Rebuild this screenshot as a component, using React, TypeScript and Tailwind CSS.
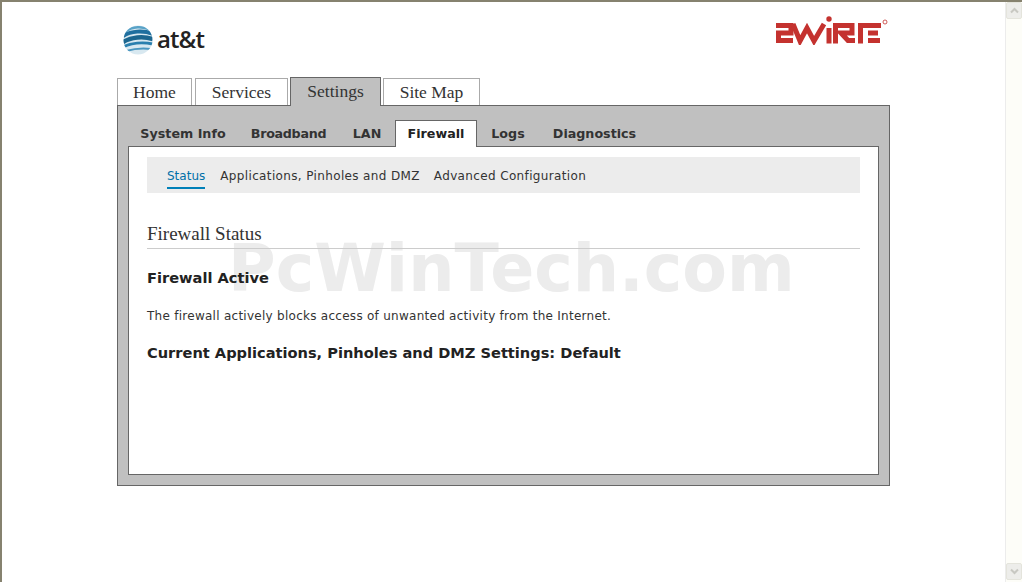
const mainTabs = [
  { label: 'Home', width: 'w-[75px] mr-px' },
  { label: 'Services', width: 'w-[93px]' },
  { label: 'Settings', width: 'w-[91px]', active: true },
  { label: 'Site Map', width: 'w-[97px]' },
]

const subTabs = [
  { label: 'System Info', width: 'w-[110px]' },
  { label: 'Broadband', width: 'w-[101px] tracking-[-0.3px]' },
  { label: 'LAN', width: 'w-[56px]' },
  { label: 'Firewall', width: 'w-[82px]', active: true },
  { label: 'Logs', width: 'w-[62px]' },
  { label: 'Diagnostics', width: 'w-[111px]' },
]

function AttLogo() {
  return (
    <div className="flex items-center gap-[4px]">
      <svg width="30" height="30" viewBox="0 0 30 30" aria-hidden="true">
        <defs>
          <clipPath id="globe">
            <circle cx="15" cy="15" r="14.5" />
          </clipPath>
        </defs>
        <g clipPath="url(#globe)">
          <rect width="30" height="30" fill="#d8e8f0" />
          <path d="M2 7 C9 1 20 1 28 5" stroke="#5aa3c8" strokeWidth="2.5" fill="none" />
          <path d="M0 11 C8 6 20 5 30 9" stroke="#1f6f9f" strokeWidth="4" fill="none" />
          <path d="M0 17 C8 12 20 11 30 14" stroke="#1c668f" strokeWidth="4.5" fill="none" />
          <path d="M0 22 C8 18 20 17 30 19" stroke="#2a7fae" strokeWidth="3" fill="none" />
          <path d="M3 26 C10 24 20 23 28 24" stroke="#4b97c0" strokeWidth="2" fill="none" />
        </g>
      </svg>
      <span className="-mt-[3px] font-['Open_Sans',sans-serif] text-[24px] font-semibold leading-none tracking-[-0.9px] text-[#222]">at&amp;t</span>
    </div>
  )
}

function TwoWireLogo() {
  return (
    <svg width="112" height="29" viewBox="0 0 112 29" aria-hidden="true">
      <g fill="none" stroke="#c4322f" strokeWidth="5">
        <path d="M0 9.5 H15 V17 H2.5 V24.5 H17" />
        <path d="M17 8 L24 25 L31 12 L38 25 L48 8" />
        <path d="M53 12 V27.5" />
        <path d="M59.5 27.5 V9.5 H76 V17 H65 L72 24.5 H79" />
        <path d="M84.5 27.5 V9.5 H105 M92 17 H102 M92 24.5 H104" />
      </g>
      <circle cx="53" cy="3" r="2.7" fill="#c4322f" />
      <circle cx="109" cy="6" r="2" fill="none" stroke="#c4322f" strokeWidth="0.8" />
    </svg>
  )
}

function App() {
  return (
    <div className="relative flex h-[582px] w-[1022px] overflow-hidden border-t-2 border-l-2 border-[#86826f] bg-white font-['DejaVu_Sans',sans-serif]">
      <div className="flex flex-1 flex-col pl-[115px]">
        <header className="flex h-[75px] w-[773px] items-start justify-between">
          <div className="ml-[6px] mt-[23px]">
            <AttLogo />
          </div>
          <div className="mr-[2px] mt-[14px]">
            <TwoWireLogo />
          </div>
        </header>

        <nav className="relative z-10 flex h-[28px] items-end gap-[2px] font-['Liberation_Serif',serif]">
          {mainTabs.map((tab) =>
            tab.active ? (
              <div
                key={tab.label}
                className={`${tab.width} -mb-px flex h-[29px] items-center justify-center border border-b-0 border-[#666] bg-[#c0c0c0] pb-[2px] text-[17.5px] text-[#333]`}>
                {tab.label}
              </div>
            ) : (
              <div
                key={tab.label}
                className={`${tab.width} flex h-[27px] items-center justify-center border border-b-0 border-[#aaa] bg-white text-[17.5px] text-[#333]`}>
                {tab.label}
              </div>
            ),
          )}
        </nav>

        <main className="flex h-[381px] w-[773px] flex-col border border-[#666] bg-[#c0c0c0] px-[10px] pb-[10px] pt-[14px]">
          <div className="relative z-10 flex h-[27px]">
            {subTabs.map((tab) =>
              tab.active ? (
                <div
                  key={tab.label}
                  className={`${tab.width} flex h-[27px] items-center justify-center border border-b-0 border-[#666] bg-white text-[12.7px] font-bold text-[#222]`}>
                  {tab.label}
                </div>
              ) : (
                <div
                  key={tab.label}
                  className={`${tab.width} flex h-[27px] items-center justify-center text-[12.7px] font-bold text-[#333]`}>
                  {tab.label}
                </div>
              ),
            )}
          </div>

          <section className="relative -mt-px flex-1 border border-[#666] bg-white px-[18px] pt-[10px]">
            {/* watermark sits under the text */}
            <div className="pointer-events-none absolute left-[99px] top-[82px] whitespace-nowrap text-[65px] font-bold leading-[80px] text-[#ececec]">
              PcWinTech.com
            </div>

            <div className="relative flex h-[36px] items-center bg-[#ececec] pl-[20px] pt-[2px] text-[12px] text-[#333]">
              <span className="mt-[2px] border-b-2 border-[#0080b8] pb-[2px] pt-[2px] text-[#0070a8]">Status</span>
              <span className="ml-[15px] tracking-[0.36px]">Applications, Pinholes and DMZ</span>
              <span className="ml-[14px] tracking-[0.36px]">Advanced Configuration</span>
            </div>

            <h2 className="relative mt-[30px] border-b border-[#ccc] pb-[3px] font-['Liberation_Serif',serif] text-[19px] leading-[22px] text-[#333]">
              Firewall Status
            </h2>
            <h3 className="relative mt-[19px] text-[14.6px] font-bold leading-[20px] text-[#222]">Firewall Active</h3>
            <p className="relative mt-[20px] text-[12px] leading-[16px] tracking-[0.27px] text-[#333]">
              The firewall actively blocks access of unwanted activity from the Internet.
            </p>
            <h3 className="relative mt-[19px] text-[14.6px] font-bold leading-[20px] text-[#222]">
              Current Applications, Pinholes and DMZ Settings: Default
            </h3>
          </section>
        </main>
      </div>

      <div className="flex h-full w-[17px] flex-col justify-between border-l border-[#ececec] bg-[#fdfdf8] pb-[2px]">
        <div className="flex h-[17px] w-[16px] items-center justify-center rounded-[2px] border border-[#e4e4dc] bg-[#ededea]">
          <svg width="9" height="7" viewBox="0 0 9 7" aria-hidden="true">
            <path d="M1 5.5 L4.5 2 L8 5.5" fill="none" stroke="#c8c8c2" strokeWidth="2" />
          </svg>
        </div>
        <div className="flex h-[17px] w-[16px] items-center justify-center rounded-[2px] border border-[#e4e4dc] bg-[#ededea]">
          <svg width="9" height="7" viewBox="0 0 9 7" aria-hidden="true">
            <path d="M1 1.5 L4.5 5 L8 1.5" fill="none" stroke="#c8c8c2" strokeWidth="2" />
          </svg>
        </div>
      </div>
    </div>
  )
}

export default App
